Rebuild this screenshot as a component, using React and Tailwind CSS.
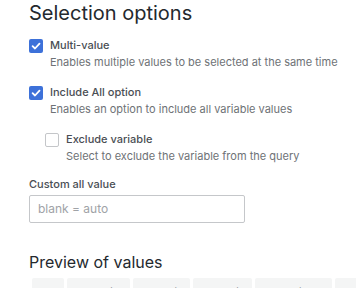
function Check({ checked }) {
  if (checked) {
    return (
      <div className="mt-[2px] flex h-[14px] w-[14px] shrink-0 items-center justify-center rounded-[2px] bg-[#3d71d9]">
        <svg width="10" height="10" viewBox="0 0 10 10" fill="none">
          <path d="M1.6 5.2 L4 7.5 L8.5 2.6" stroke="white" strokeWidth="1.8" strokeLinecap="round" strokeLinejoin="round" />
        </svg>
      </div>
    );
  }
  return <div className="mt-[2px] h-[14px] w-[14px] shrink-0 rounded-[2px] border border-[#c4c6c9] bg-white"></div>;
}

function Option({ checked, label, description, className }) {
  return (
    <div className={"flex items-start " + (className || "")}>
      <Check checked={checked} />
      <div className="ml-[7px]">
        <div className="text-[11px] font-medium leading-[16px] text-[#4a4e54]">{label}</div>
        <div className="mt-px text-[11px] leading-[16px] text-[#6e7276]">{description}</div>
      </div>
    </div>
  );
}

const chips = [
  { text: "All", w: "w-[32px]" },
  { text: "us-east-1", w: "w-[63px]" },
  { text: "eu-west-1", w: "w-[57px]" },
  { text: "ap-south", w: "w-[59px]" },
  { text: "us-central-1", w: "w-[77px]" },
  { text: "eu-north-1", w: "w-[64px]" },
];

export default function App() {
  return (
    <div
      className="h-[288px] w-[356px] overflow-hidden bg-white pl-[29px] text-[#24292e]"
      style={{ fontFamily: "Inter, 'Noto Sans', sans-serif" }}
    >
      <h2 className="mt-px text-[20px] font-normal leading-[24px] text-[#24292e]">Selection options</h2>

      <Option
        className="mt-[12px]"
        checked
        label="Multi-value"
        description="Enables multiple values to be selected at the same time"
      />
      <Option
        className="mt-[14px]"
        checked
        label="Include All option"
        description="Enables an option to include all variable values"
      />
      <Option
        className="ml-[16px] mt-[14px]"
        checked={false}
        label="Exclude variable"
        description="Select to exclude the variable from the query"
      />

      <div className="mt-[12px] text-[11px] font-medium leading-[16px] text-[#4a4e54]">Custom all value</div>
      <div className="mt-[3px] flex h-[28px] w-[216px] items-center rounded-[2px] border border-[#c5c7ca] bg-white px-[8px] text-[12px] text-[#a0a3a7]">
        blank = auto
      </div>

      <h3 className="mt-[29px] text-[16px] font-normal leading-[20px] text-[#24292e]">Preview of values</h3>
      <div className="mt-[6px] flex gap-[3px] whitespace-nowrap pl-[3px]">
        {chips.map((c) => (
          <div
            key={c.text}
            className={"flex h-[28px] shrink-0 items-center justify-center rounded-[2px] bg-[#f4f5f5] text-[11px] text-[#464a50] " + c.w}
          >
            {c.text}
          </div>
        ))}
      </div>
    </div>
  );
}
